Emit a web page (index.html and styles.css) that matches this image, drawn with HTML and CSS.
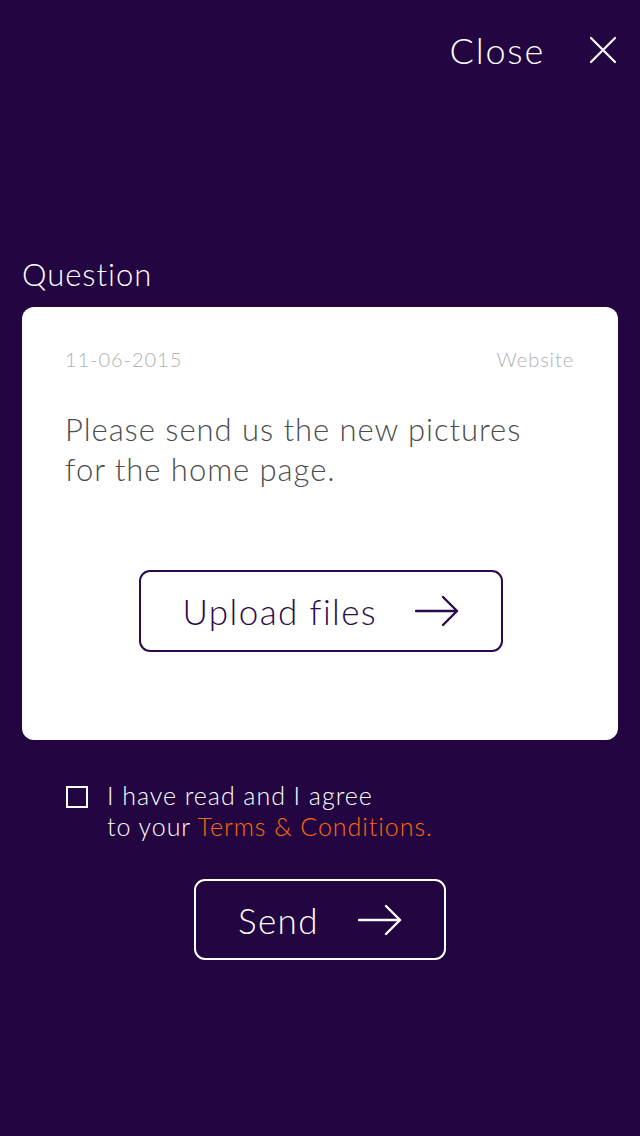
FILE: index.html
```html
<!DOCTYPE html>
<html>
<head>
<meta charset="utf-8">
<link rel="stylesheet" href="styles.css">
</head>
<body>
<div class="screen">
  <header class="topbar">
    <span class="close-label">Close</span>
    <svg class="close-icon" width="28" height="28" viewBox="0 0 28 28"><path d="M2 2 L26 26 M26 2 L2 26" stroke="#fff" stroke-width="2.2" stroke-linecap="round"/></svg>
  </header>
  <main class="content">
    <h1 class="section-title">Question</h1>
    <section class="card">
      <div class="meta">
        <span>11-06-2015</span>
        <span>Website</span>
      </div>
      <p class="message">Please send us the new pictures<br>for the home page.</p>
      <div class="btn-row">
        <button class="btn btn-dark"><span>Upload files</span>
          <svg width="44" height="32" viewBox="0 0 44 32"><path d="M1 16 H42 M28 2 L42 16 L28 30" fill="none" stroke="currentColor" stroke-width="2.4" stroke-linecap="round" stroke-linejoin="round"/></svg>
        </button>
      </div>
    </section>
    <label class="agree">
      <span class="checkbox"></span>
      <span class="agree-text">I have read and I agree<br>to your <span class="link">Terms &amp; Conditions.</span></span>
    </label>
    <div class="btn-row">
      <button class="btn btn-light"><span>Send</span>
        <svg width="44" height="32" viewBox="0 0 44 32"><path d="M1 16 H42 M28 2 L42 16 L28 30" fill="none" stroke="currentColor" stroke-width="2.4" stroke-linecap="round" stroke-linejoin="round"/></svg>
      </button>
    </div>
  </main>
</div>
</body>
</html>
```

FILE: styles.css
```css
* { box-sizing: border-box; }
html, body { margin: 0; padding: 0; }
body {
  background: #230542;
  font-family: Lato, "Open Sans", sans-serif;
  font-weight: 300;
  letter-spacing: 0.06em;
  color: #fff;
}
.screen {
  width: 640px;
  height: 1136px;
  display: flex;
  flex-direction: column;
}
.topbar {
  display: flex;
  justify-content: flex-end;
  align-items: center;
  gap: 44px;
  padding: 27px 23px 0 0;
  height: 72px;
}
.close-label {
  font-size: 36px;
  line-height: 40px;
  letter-spacing: 0.05em;
}
.close-icon { display: block; flex: none; }
.content {
  padding: 0 22px;
  margin-top: 184px;
}
.section-title {
  margin: 0 0 15px;
  font-size: 31px;
  font-weight: 300;
  line-height: 36px;
}
.card {
  background: #fff;
  border-radius: 12px;
  height: 433px;
  padding: 38px 45px 0 43px;
}
.meta {
  display: flex;
  justify-content: space-between;
  font-size: 20px;
  color: #b0b0b0;
  line-height: 28px;
}
.meta span:last-child { margin-right: -0.06em; }
.message {
  margin: 36px 0 0;
  font-size: 31px;
  line-height: 40px;
  color: #4d4d4d;
}
.btn-row {
  display: flex;
  justify-content: center;
}
.card .btn-row { margin-top: 81px; padding-left: 3px; }
.btn {
  font-family: inherit;
  font-weight: 300;
  letter-spacing: 0.04em;
  font-size: 35px;
  background: transparent;
  border-radius: 11px;
  display: flex;
  align-items: center;
  justify-content: space-between;
  cursor: pointer;
}
.btn-dark {
  width: 364px;
  height: 82px;
  border: 2px solid #2a0b4b;
  color: #2a0b4b;
  padding: 0 42px 0 42px;
}
.btn-light {
  width: 252px;
  height: 81px;
  border: 2px solid #fff;
  color: #fff;
  padding: 0 42px 0 42px;
}
.agree {
  display: flex;
  gap: 19px;
  margin: 40px 0 0 44px;
}
.checkbox {
  width: 22px;
  height: 22px;
  border: 2px solid #fff;
  margin-top: 6px;
  flex: none;
}
.agree-text {
  font-size: 25px;
  line-height: 31px;
}
.link { color: #ff6c0a; }
.content > .btn-row { margin-top: 37px; }
```
